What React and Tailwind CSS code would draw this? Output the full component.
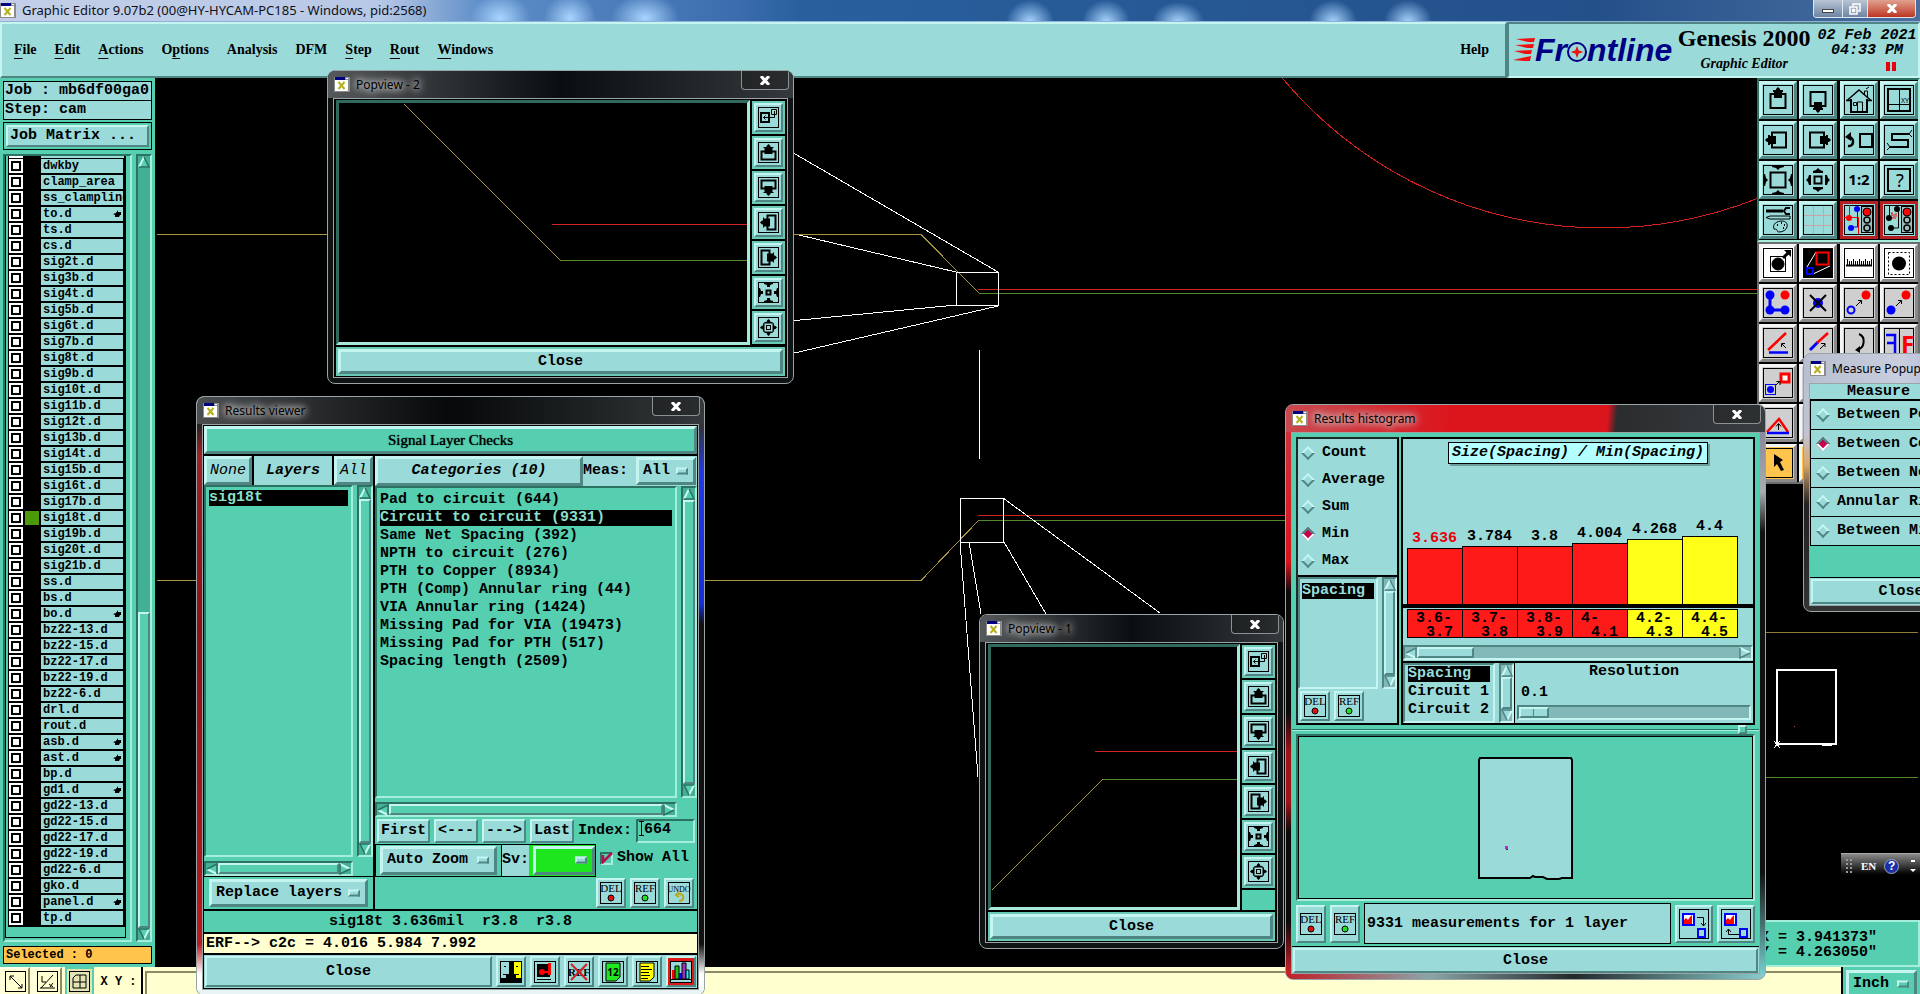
import React from 'react';
import clsx from 'clsx';

const MONO = "font-['Liberation_Mono',monospace] text-[15px] leading-[18px] font-bold";
const SERIF = "font-['Liberation_Serif',serif]";
const SANS = "font-['Noto_Sans',sans-serif]";

const RAISED = 'border-2 border-t-[#c4f5f1] border-l-[#c4f5f1] border-r-[#4f8583] border-b-[#4f8583]';
const SUNKEN = 'border-2 border-t-[#4f8583] border-l-[#4f8583] border-r-[#c4f5f1] border-b-[#c4f5f1]';
const TEAL_SUNKEN = 'border-2 border-t-[#2b7262] border-l-[#2b7262] border-r-[#a5eedb] border-b-[#a5eedb]';
const GRAY_RAISED = 'border-[3px] border-t-[#f4f4f4] border-l-[#f4f4f4] border-r-[#8a8a8a] border-b-[#8a8a8a]';

const layers = [
  'dwkby', 'clamp_area', 'ss_clampline', 'to.d', 'ts.d', 'cs.d', 'sig2t.d', 'sig3b.d', 'sig4t.d', 'sig5b.d',
  'sig6t.d', 'sig7b.d', 'sig8t.d', 'sig9b.d', 'sig10t.d', 'sig11b.d', 'sig12t.d', 'sig13b.d', 'sig14t.d',
  'sig15b.d', 'sig16t.d', 'sig17b.d', 'sig18t.d', 'sig19b.d', 'sig20t.d', 'sig21b.d', 'ss.d', 'bs.d', 'bo.d',
  'bz22-13.d', 'bz22-15.d', 'bz22-17.d', 'bz22-19.d', 'bz22-6.d', 'drl.d', 'rout.d', 'asb.d', 'ast.d', 'bp.d',
  'gd1.d', 'gd22-13.d', 'gd22-15.d', 'gd22-17.d', 'gd22-19.d', 'gd22-6.d', 'gko.d', 'panel.d', 'tp.d',
];
const handLayers = ['to.d', 'bo.d', 'asb.d', 'ast.d', 'gd1.d', 'panel.d'];

const categories = [
  'Pad to circuit (644)', 'Circuit to circuit (9331)', 'Same Net Spacing (392)', 'NPTH to circuit (276)',
  'PTH to Copper (8934)', 'PTH (Comp) Annular ring (44)', 'VIA Annular ring (1424)',
  'Missing Pad for VIA (19473)', 'Missing Pad for PTH (517)', 'Spacing length (2509)',
];

const bars = [
  { value: '3.636', from: '3.6-', to: '3.7', height: 56, low: true, first: true },
  { value: '3.784', from: '3.7-', to: '3.8', height: 58, low: true },
  { value: '3.8', from: '3.8-', to: '3.9', height: 58, low: true },
  { value: '4.004', from: '4-', to: '4.1', height: 61, low: true },
  { value: '4.268', from: '4.2-', to: '4.3', height: 65 },
  { value: '4.4', from: '4.4-', to: '4.5', height: 68 },
];

const menus = [
  ['', 'F', 'ile'], ['', 'E', 'dit'], ['', 'A', 'ctions'], ['O', 'p', 'tions'], ['Analysis', '', ''],
  ['DFM', '', ''], ['', 'S', 'tep'], ['', 'R', 'out'], ['', 'W', 'indows'],
];

/* ---------- icons ---------- */

const Icon = ({ size = 30, children, className }) => (
  <svg width={size} height={size} viewBox={`0 0 ${size} ${size}`} fill="none" stroke="black" className={className} aria-hidden="true">
    {children}
  </svg>
);

const XIcon = () => (
  <svg width="16" height="15" viewBox="0 0 16 15" className="shrink-0" aria-hidden="true">
    <rect x="0" y="0" width="16" height="15" fill="#8b8b8b" />
    <rect x="1" y="3" width="13" height="11" fill="#fff" />
    <rect x="1" y="0" width="10" height="3" fill="#000080" />
    <rect x="12" y="1" width="2" height="1" fill="#fff" />
    <path d="M4.5 5l6 7M10.5 5l-6 7" stroke="#b5b01e" strokeWidth="2" />
  </svg>
);

const PanIcon = ({ turn }) => (
  <Icon>
    <g transform={`rotate(${turn} 15 15)`}>
      <rect x="7.5" y="9" width="15" height="14" strokeWidth="2" />
      <path d="M15 2l2 2v1h3v2h-1v6h-8v-6h-1v-2h3v-1z" fill="black" stroke="none" />
    </g>
  </Icon>
);

const SmallPanIcon = ({ turn }) => (
  <Icon size={21}>
    <rect x=".5" y=".5" width="20" height="20" />
    <g transform={`rotate(${turn} 10.5 10.5)`}>
      <path d="M7 9.5H3.5v8h14v-8H14" strokeWidth="2" />
      <path d="M10.5 2l2 2v1h3v1h-1v6h-8v-6h-1v-1h3v-1z" fill="black" stroke="none" />
    </g>
  </Icon>
);

const fourWay = [0, 90, 180, 270];

const SmallZoomIcon = ({ inward }) => (
  <Icon size={21}>
    <rect x=".5" y=".5" width="20" height="20" />
    <rect x="8.5" y="8.5" width="4" height="4" strokeWidth={inward ? 2 : 1} />
    {fourWay.map(t => (
      <path key={t} transform={`rotate(${t} 10.5 10.5)`} d={inward ? 'M6 1h9v1l-3 1v2h-3v-2l-3-1z' : 'M10.5 2l1.500 1.500v1l3 1v1h-9v-1l3-1v-1z'} fill="black" stroke="none" />
    ))}
  </Icon>
);

const PopviewIcon = () => (
  <Icon size={21}>
    <rect x=".5" y=".5" width="20" height="20" />
    <rect x="3" y="6" width="8" height="9" strokeWidth="2" />
    <path d="M13.500 2.500h5v5h-5zM16.500 4v6.500h-11M7.500 8.500l-2 2 2 2" />
  </Icon>
);

const ZoomIcon = ({ inward }) => (
  <Icon>
    <rect x={inward ? 7.5 : 11.5} y={inward ? 7.5 : 11.5} width={inward ? 15 : 7} height={inward ? 15 : 7} strokeWidth="2" />
    {fourWay.map(t => (
      <path key={t} transform={`rotate(${t} 15 15)`} d={inward ? 'M9 1h12v1l-4 1-2 2-2-2-4-1z' : 'M15 3l2 2 3 1v2h-10v-2l3-1z'} fill="black" stroke="none" />
    ))}
  </Icon>
);

const TrafficIcon = ({ net }) => (
  <Icon>
    {net === 'blue' ? (
      <>
        <path d="M5.500 0v13M0 12.500h14.500V29" stroke="red" />
        <circle cx="5" cy="13" r="3" fill="red" stroke="none" />
        <path d="M13.500 4v18h-6" stroke="blue" />
        <circle cx="13" cy="4" r="3" fill="blue" stroke="none" />
        <circle cx="7" cy="23" r="3" fill="blue" stroke="none" />
      </>
    ) : (
      <>
        <path d="M5.500 0v13M14.500 4v19h-7" />
        <path d="M7 13h5M8 11v-3M10 12V9M12 12V8M7 8h2" stroke="red" />
        <circle cx="5" cy="13" r="3" fill="black" stroke="none" />
        <circle cx="13" cy="4" r="3" fill="black" stroke="none" />
        <circle cx="7" cy="23" r="3" fill="black" stroke="none" />
      </>
    )}
    <rect x="17.500" y="1.500" width="11" height="26" fill="#9cbcbb" />
    <circle cx="23" cy="7" r="4" fill="red" />
    <circle cx="23" cy="15" r="3" strokeWidth="1.500" />
    <circle cx="23" cy="23" r="3" strokeWidth="1.500" />
  </Icon>
);

const viewTools = [
  { name: 'Pan up', icon: <PanIcon turn={0} /> },
  { name: 'Pan down', icon: <PanIcon turn={180} /> },
  { name: 'Home', icon: (
    <Icon>
      <path d="M3 15.500L15 5l12 10.500M2 15.500h4M24 15.500h4" strokeWidth="1.500" />
      <path d="M13.500 26v-9h5v9M9.500 17.500h3v3h-3zM20.500 10V6h3v6M22 4l3-2" />
      <path d="M7 14v13h16V14" strokeWidth="2" />
    </Icon>
  ) },
  { name: 'XY view', icon: (
    <Icon>
      <rect x="4" y="4" width="22" height="22" strokeWidth="2" />
      <path d="M15.500 4v22M4 19.500h22" />
      <text x="17" y="18" fontSize="7" stroke="none" fill="black" className={SANS}>XY</text>
    </Icon>
  ) },
  { name: 'Pan left', icon: <PanIcon turn={270} /> },
  { name: 'Pan right', icon: <PanIcon turn={90} /> },
  { name: 'Previous view', icon: (
    <Icon>
      <rect x="16" y="9" width="12" height="13" strokeWidth="2" />
      <path d="M4 21c6 1 7-8 1-9" strokeWidth="2.500" />
      <path d="M1 12l6-5v9z" fill="black" stroke="none" />
    </Icon>
  ) },
  { name: 'Snake', icon: (
    <Icon>
      <path d="M25 9H8v6h16v7H6" strokeWidth="2" />
      <path d="M25 9l3-4M25 9l3 3M6 22l-3-4M6 22l-3 3" />
    </Icon>
  ) },
  { name: 'Zoom out', icon: <ZoomIcon inward /> },
  { name: 'Zoom in', icon: <ZoomIcon /> },
  { name: 'Zoom 1:2', icon: (
    <Icon><text x="15" y="20" textAnchor="middle" fontSize="15" fontWeight="bold" stroke="none" fill="black" className={SANS}>1:2</text></Icon>
  ) },
  { name: 'Query', icon: (
    <Icon>
      <rect x="4" y="4" width="22" height="22" strokeWidth="2" />
      <text x="16" y="22" textAnchor="middle" fontSize="18" stroke="none" fill="black" className={SANS}>?</text>
    </Icon>
  ) },
  { name: 'Settings', icon: (
    <Icon>
      <path d="M3 6h17" strokeWidth="3" />
      <path d="M27 3h-4l-2 3 2 3h4" strokeWidth="2" />
      <path d="M3 12.500l4-1.500h20v3H7z" />
      <path d="M11 24c-2-5 3-8 8-8 4 0 6 3 5 6-1 3-4 5-8 5-3 0 0-3-5-3z" />
      <path d="M14 20h1M18 18h1M21 20h1M20 23h1" strokeWidth="2" />
    </Icon>
  ) },
  { name: 'Grid', icon: (
    <Icon><path d="M10.500 1v28M20.500 1v28M1 10.500h28M1 20.500h28" stroke="#c9a5a8" /></Icon>
  ) },
  { name: 'Net filter', alert: true, icon: <TrafficIcon net="blue" /> },
  { name: 'Resistor filter', alert: true, icon: <TrafficIcon net="black" /> },
];

const editTools = [
  { name: 'Select feature', tone: 'white', icon: (
    <Icon>
      <rect x="7.500" y="8.500" width="15" height="15" />
      <circle cx="15" cy="16" r="6" fill="black" />
      <path d="M20 10l7-7" strokeWidth="3" />
      <path d="M21 2h7v7z" fill="black" stroke="none" />
    </Icon>
  ) },
  { name: 'Select area', tone: 'white', icon: (
    <Icon>
      <rect x="1" y="1" width="28" height="28" fill="black" />
      <path d="M4 19L13 4M10 26l17-8" stroke="white" />
      <rect x="13.500" y="4.500" width="12" height="12" stroke="red" strokeWidth="2" />
      <rect x="4" y="20" width="6" height="6" stroke="blue" strokeWidth="2" />
    </Icon>
  ) },
  { name: 'Ruler', tone: 'white', icon: (
    <Icon>
      <path d="M2 17.500h26" strokeWidth="2" />
      <path d="M3.500 11v6M5.500 13v4M7.500 13v4M9.500 11v6M11.500 13v4M13.500 13v4M15.500 11v6M17.500 13v4M19.500 13v4M21.500 11v6M23.500 13v4M25.500 13v4M27.500 11v6" />
    </Icon>
  ) },
  { name: 'Highlight', tone: 'white', icon: (
    <Icon>
      <rect x="4.500" y="4.500" width="21" height="22" strokeDasharray="2 2" />
      <circle cx="15" cy="15.500" r="7" fill="black" stroke="none" />
    </Icon>
  ) },
  { name: 'Copy chain', icon: (
    <Icon>
      <path d="M7 7v15h15" stroke="blue" strokeWidth="3" />
      <circle cx="7" cy="7" r="4.500" fill="blue" stroke="none" />
      <circle cx="7" cy="22" r="4.500" fill="blue" stroke="none" />
      <circle cx="22" cy="22" r="4.500" fill="blue" stroke="none" />
      <circle cx="22" cy="7" r="4.500" fill="red" stroke="none" />
    </Icon>
  ) },
  { name: 'Delete', icon: (
    <Icon>
      <circle cx="15" cy="15" r="5" fill="blue" stroke="none" />
      <path d="M7 7l16 16M23 7L7 23" strokeWidth="2" />
    </Icon>
  ) },
  { name: 'Move', icon: (
    <Icon>
      <circle cx="7" cy="22" r="3.500" stroke="blue" strokeWidth="2" />
      <circle cx="22" cy="7" r="4.500" fill="red" stroke="none" />
      <path d="M12 18l5-5M14 12.500h3.500V16" />
    </Icon>
  ) },
  { name: 'Copy', icon: (
    <Icon>
      <circle cx="7" cy="22" r="4.500" fill="blue" stroke="none" />
      <circle cx="22" cy="7" r="4.500" fill="red" stroke="none" />
      <path d="M12 18l5-5M14 12.500h3.500V16" />
    </Icon>
  ) },
  { name: 'Angle', icon: (
    <Icon>
      <path d="M5 22L23 5" stroke="red" strokeWidth="2.500" />
      <path d="M6 24.500h19" stroke="blue" strokeWidth="2.500" />
      <path d="M23 20l-4-4M18.500 19v-3.500h3.500" />
    </Icon>
  ) },
  { name: 'Stretch line', icon: (
    <Icon>
      <path d="M7 22l8-8" stroke="blue" strokeWidth="3" />
      <path d="M14 15L25 5" stroke="red" strokeWidth="2.500" />
      <path d="M17 21l5-5M18 15.500h4V19" />
    </Icon>
  ) },
  { name: 'Rotate', icon: (
    <Icon>
      <path d="M15 6c7 3 6 14-2 16" strokeWidth="2" />
      <path d="M11 22l5-4v7z" fill="black" stroke="none" />
    </Icon>
  ) },
  { name: 'Mirror', icon: (
    <Icon>
      <path d="M2 7h9v19M3 15h8" stroke="blue" strokeWidth="2.500" />
      <path d="M15.500 1v28" />
      <text x="17" y="25" fontSize="24" fontWeight="bold" stroke="none" fill="red" className={SANS}>F</text>
    </Icon>
  ) },
  { name: 'Substitute', icon: (
    <Icon>
      <rect x="18" y="6" width="8" height="8" stroke="red" strokeWidth="3" fill="white" />
      <rect x="2.500" y="16.500" width="10" height="10" stroke="blue" />
      <circle cx="7.500" cy="21.500" r="3.500" fill="blue" stroke="none" />
      <path d="M13 17l3-3M13.500 13.500H17V17" />
    </Icon>
  ) },
  { name: 'Resize' }, { name: 'Polarity' }, { name: 'Attributes' },
  { name: 'Snap angle', icon: (
    <Icon>
      <path d="M4 24L16 11l9 13" stroke="red" strokeWidth="2.500" />
      <path d="M4 25h22" stroke="blue" strokeWidth="2.500" />
      <path d="M15.500 22v-6M13 18.500l2.500-3 2.500 3" />
    </Icon>
  ) },
  { name: 'Snap edge' }, { name: 'Snap center' }, { name: 'Snap grid' },
  { name: 'Pointer', tone: 'orange', icon: (
    <Icon><path d="M11 6l9 6-3 2 4 8-3 1-4-7-3 3z" fill="black" stroke="none" /></Icon>
  ) },
  { name: 'Frame select', tone: 'orange' }, { name: 'Polygon select', tone: 'orange' }, { name: 'Net select', tone: 'orange' },
];

/* ---------- motif widgets ---------- */

const Select = ({ label, options, className, boxClass = 'bg-[#9adbda]', markClass = 'bg-[#9adbda]' }) => (
  <span className={clsx('relative flex', className)}>
    <select aria-label={label} className={clsx(RAISED, boxClass, 'w-full appearance-none border-[3px] px-1')}>
      {options.map(o => <option key={o}>{o}</option>)}
    </select>
    <span className={clsx(RAISED, markClass, 'pointer-events-none absolute right-2 top-1/2 h-[7px] w-3 -translate-y-1/2')} />
  </span>
);

const Arrow = ({ turn, teal }) => (
  <svg width="12" height="12" viewBox="0 0 12 12" className="shrink-0" aria-hidden="true">
    <g transform={`rotate(${turn} 6 6)`}>
      <path d="M6 1L11 11H1z" fill={teal ? '#55cfb0' : '#9adbda'} />
      <path d="M1 11L6 1" stroke="#c9fbf2" strokeWidth="2" />
      <path d="M6 1l5 10H1" stroke={teal ? '#2b7262' : '#4f8583'} strokeWidth="1.500" fill="none" />
    </g>
  </svg>
);

const ScrollBar = ({ horizontal, teal, thumb = 'flex-1', className }) => (
  <div className={clsx(
    'flex shrink-0',
    teal ? [TEAL_SUNKEN, 'bg-[#43b095]'] : [SUNKEN, 'bg-[#83b8b8]'],
    horizontal ? 'h-[15px]' : 'w-4 flex-col',
    className,
  )}>
    <Arrow turn={horizontal ? 270 : 0} teal={teal} />
    <div className={clsx('flex flex-1', !horizontal && 'flex-col')}>
      <div className={clsx(RAISED, teal ? 'bg-[#55cfb0]' : 'bg-[#9adbda]', thumb)} />
    </div>
    <Arrow turn={horizontal ? 90 : 180} teal={teal} />
  </div>
);

const Radio = ({ name, label, checked }) => (
  <label className="flex items-center gap-[7px] whitespace-nowrap">
    <input
      type="radio"
      name={name}
      defaultChecked={checked}
      className="m-0.5 size-[10px] shrink-0 rotate-45 appearance-none border-2 border-t-[#c4f5f1] border-l-[#c4f5f1] border-r-[#4f8583] border-b-[#4f8583] checked:border-t-[#4f8583] checked:border-l-[#4f8583] checked:border-r-white checked:border-b-white checked:bg-[#c8004b]"
    />
    {label}
  </label>
);

const MarkButton = ({ text, dot, tall }) => (
  <button aria-label={text} className={clsx(RAISED, 'flex w-[30px] items-center justify-center bg-[#9adbda] font-normal', tall ? 'h-[38px]' : 'h-[30px]')}>
    <svg width="24" height="24" viewBox="0 0 24 24" className="shrink-0" aria-hidden="true">
      <rect x="1.500" y="1.500" width="21" height="21" fill="none" stroke="black" />
      <text x="12" y="11" textAnchor="middle" fontSize={text === 'UNDO' ? 8 : 11} className={SERIF}>{text}</text>
      {dot
        ? <circle cx="12" cy="17" r="3" fill={dot} stroke="black" />
        : <path d="M10 13h3c5 1 4 7-1 7M12 11l-3 3 3 2" fill="none" stroke="#b9a91c" strokeWidth="2" />}
    </svg>
  </button>
);

const CloseButton = ({ className }) => (
  <button className={clsx(RAISED, 'h-[25px] w-full bg-[#9adbda]', className)}>Close</button>
);

const Window = ({ title, className, titleClass, edge = 'bg-[#101314]', leftEdge, rightEdge, light, children }) => (
  <section className={clsx('absolute flex flex-col overflow-hidden rounded-lg border border-[#9aa3a6]', edge, className)}>
    <header className={clsx('flex shrink-0 items-center gap-1.5 pl-1.5', light ? 'h-[29px]' : 'h-[27px]', titleClass)}>
      <XIcon />
      <h2 className={clsx(SANS, 'flex-1 text-[12px] text-black', !light && '[text-shadow:0_0_6px_#ddd,0_0_8px_#ccc,0_0_12px_#bbb]')}>{title}</h2>
      {!light && (
        <button aria-label="Close window" className="mr-1 flex h-[19px] w-12 items-center justify-center self-start rounded-b border border-t-0 border-[#8b9294] bg-black/20">
          <svg width="10" height="9" viewBox="0 0 10 9" aria-hidden="true"><path d="M1 0l8 9M9 0L1 9" stroke="white" strokeWidth="3" /></svg>
        </button>
      )}
    </header>
    <div className="flex min-h-0 flex-1">
      <div className={clsx('w-[5px] shrink-0', leftEdge)} />
      <div className={clsx(MONO, 'flex min-w-0 flex-1 flex-col border border-[#9aa3a6]')}>{children}</div>
      <div className={clsx('w-[5px] shrink-0', rightEdge)} />
    </div>
    <div className="h-[5px] shrink-0" />
  </section>
);

/* ---------- page parts ---------- */

const TitleBar = () => (
  <header className="relative flex h-[22px] shrink-0 items-center gap-1.5 border-b border-[#8fb0d8] bg-[radial-gradient(ellipse_24px_22px_at_1030px_22px,#a8d4ff,transparent),radial-gradient(ellipse_24px_22px_at_1106px_22px,#a8d4ff,transparent),radial-gradient(ellipse_26px_20px_at_1178px_22px,#a8d4ff,transparent),radial-gradient(ellipse_24px_22px_at_1333px_22px,#a8d4ff,transparent),radial-gradient(ellipse_24px_22px_at_1408px_22px,#a8d4ff,transparent),radial-gradient(ellipse_30px_24px_at_500px_18px,#a8d4ff,transparent),radial-gradient(ellipse_26px_24px_at_570px_18px,#a8d4ff,transparent),radial-gradient(ellipse_34px_24px_at_645px_18px,#a8d4ff,transparent),linear-gradient(90deg,#c3cfe8_0,#b7c8e6_380px,#5f8fc8_480px,#3b6cad_740px,#28609e_800px,#24508a_1600px,#4a6f9f_1920px)]">
    <XIcon />
    <h1 className={clsx(SANS, 'text-[13px] text-[#101018]')}>Graphic Editor 9.07b2 (00@HY-HYCAM-PC185 - Windows, pid:2568)</h1>
    <div className="mr-1 ml-auto flex h-[18px] self-start overflow-hidden rounded-b border border-t-0 border-[#dfe6ee]">
      <button aria-label="Minimize" className="flex w-7 items-end justify-center bg-linear-to-b from-[#b9c5d4] to-[#6e86a4] pb-1"><span className="h-1 w-3 border border-[#444] bg-white" /></button>
      <button aria-label="Restore" className="flex w-[26px] items-center justify-center border-x border-[#dfe6ee] bg-linear-to-b from-[#b9c5d4] to-[#6e86a4]">
        <svg width="12" height="12" viewBox="0 0 12 12" fill="none" stroke="white" strokeWidth="1.500" aria-hidden="true"><path d="M4 3V1h7v7H9" /><rect x="1" y="4" width="7" height="7" /><rect x="3.500" y="6.500" width="2" height="2" /></svg>
      </button>
      <button aria-label="Exit" className="flex w-[47px] items-center justify-center bg-linear-to-b from-[#e0a08f] to-[#bb3220]">
        <svg width="10" height="9" viewBox="0 0 10 9" aria-hidden="true"><path d="M1 0l8 9M9 0L1 9" stroke="white" strokeWidth="3" /></svg>
      </button>
    </div>
  </header>
);

const MenuBar = () => (
  <div className="flex h-14 shrink-0 bg-[#9adbda]">
    <nav className={clsx(SERIF, 'flex flex-1 items-center gap-[18px] border-2 border-t-[#c4f5f1] border-l-[#c4f5f1] border-r-[#4f8583] border-b-[#4f8583] pr-4 pb-0.5 pl-3 text-[14px] font-bold')}>
      {menus.map(([a, u, b]) => (
        <button key={a + u + b}>{a}<span className="underline underline-offset-4">{u}</span>{b}</button>
      ))}
      <button className="ml-auto">Help</button>
    </nav>
    <div className="flex w-[413px] border-2 border-t-[#4f8583] border-l-[#4f8583] border-r-[#c4f5f1] border-b-[#c4f5f1]">
      <div className="mt-3 ml-1 flex h-7 items-center">
        <svg width="22" height="24" viewBox="0 0 22 24" aria-hidden="true">
          <path d="M3 1l19-1-1 4h-6zM2 7l19-1-1 4h-6zM1 13l18-1-1 4h-6zM0 22l18-4-1 5h-6z" fill="#f01010" />
        </svg>
        <span className="flex items-center font-['Liberation_Sans',sans-serif] text-[32px] leading-7 font-bold text-[#000084] italic">
          Fr
          <svg width="20" height="24" viewBox="0 0 20 24" className="mt-1" aria-hidden="true">
            <circle cx="10" cy="12" r="9" fill="none" stroke="#000084" strokeWidth="2" />
            <path d="M10 8l1 3 3 1-3 1-1 3-1-3-3-1 3-1z" fill="#f01010" stroke="#f01010" strokeWidth="1.500" />
          </svg>
          ntline
        </span>
      </div>
      <div className={clsx(SERIF, 'flex flex-1 flex-col items-center font-bold')}>
        <span className="text-[24px] leading-7">Genesis 2000</span>
        <span className="mt-1 text-[14px] leading-4 italic">Graphic Editor</span>
      </div>
      <div className="flex w-[102px] flex-col items-center font-['Liberation_Mono',monospace] text-[15px] leading-[15px] font-bold italic">
        <span className="pt-1">02 Feb 2021</span>
        <span>04:33 PM</span>
        <span className="mt-1 ml-12 flex gap-0.5"><i className="h-[9px] w-1 bg-red-600" /><i className="h-[9px] w-1 bg-red-600" /></span>
      </div>
    </div>
  </div>
);

const LayerPanel = () => (
  <aside className={clsx(MONO, 'flex w-[155px] shrink-0 flex-col gap-1 bg-[#55cfb0] px-[3px] pt-[3px] whitespace-nowrap')}>
    <div>
      <div className="h-5 border border-black bg-[#9adbda] px-px">Job : mb6df00ga0</div>
      <div className="h-[19px] border border-t-0 border-black bg-[#9adbda] px-px">Step: cam</div>
    </div>
    <div className="-mt-0.5 border border-black p-0.5">
      <button className={clsx(RAISED, 'w-full bg-[#9adbda] px-0.5 text-left')}>Job Matrix ...</button>
    </div>
    <div className="flex h-[788px] gap-1">
      <div className={clsx(TEAL_SUNKEN, 'flex-1 overflow-hidden')}>
        <div className="mr-1 h-[782px] border border-t-0 border-black pl-0.5">
          <div className="flex h-[3px] gap-[18px] bg-black px-px"><span className="h-0.5 w-3.5 bg-white" /><span className="h-0.5 flex-1 bg-[#9adbda]" /></div>
          {layers.map(name => (
            <div key={name} className="flex h-4 bg-black px-px pb-0.5 text-[12px] leading-[14px]">
              <span className="flex w-3.5 items-center justify-center bg-white">
                <input id={`layer-${name}`} type="checkbox" className="size-[10px] appearance-none border-2 border-black bg-white" />
              </span>
              <span className={clsx('mr-0.5 ml-0.5 w-3.5', name === 'sig18t.d' && 'bg-[#4a9a0a]')} />
              <label htmlFor={`layer-${name}`} className="flex w-[82px] items-center justify-between overflow-hidden bg-[#9adbda] pr-0.5 pl-0.5">
                <span>{name}</span>
                {handLayers.includes(name) && (
                  <svg width="8" height="8" viewBox="0 0 8 8" className="shrink-0" aria-hidden="true"><path d="M0 4l3-1 2-3v2h3v3h-1l-1 2H2V5z" /></svg>
                )}
              </label>
            </div>
          ))}
        </div>
      </div>
      <ScrollBar teal thumb="mt-[444px] flex-1" />
    </div>
    <div className="h-[18px] border border-black bg-[#ffc44c] px-0.5 text-[12px] leading-4">Selected : 0</div>
  </aside>
);

const Canvas = () => (
  <main className="min-w-0 flex-1">
    <svg width="100%" height="100%" fill="none" shapeRendering="crispEdges" aria-label="Layer drawing" role="img">
      <g transform="translate(-155 -78)">
        <circle cx="1603" cy="-190" r="418" stroke="#d02020" />
        <path d="M157 234.500H921L979 293M157 580.500H921L979 520" stroke="#a89340" />
        <path d="M979 293.500H1760M979 520.500H1290" stroke="#4e8a2c" />
        <path d="M978 289.500H1760M978 515.500H1290" stroke="#d02020" />
        <path d="M956.500 272.500h42v33h-42zM790 151L998 272M799 235l157 37M790 321l166-16M790 354l208-48M979.500 350v109" stroke="white" />
        <path d="M960.500 498.500h43v44h-43zM1003 498l157 115M1004 542l42 72M969 542l12 72M960 542l18 235" stroke="white" />
      </g>
    </svg>
  </main>
);

const ToolButton = ({ tool, className }) => (
  <button aria-label={tool.name} className={clsx('flex size-[38px] items-center justify-center', className)}>
    <span className="size-[30px] border border-black *:-m-px">{tool.icon}</span>
  </button>
);

const toneClass = { white: 'bg-white', orange: 'bg-[#ffc44c]', gray: 'bg-[#cfcfcf]' };

const ToolColumn = () => (
  <aside className="flex w-[163px] shrink-0 flex-col">
    <div className="grid grid-cols-4 gap-0.5 border-2 border-t-[#2b7262] border-l-[#2b7262] border-r-[#a5eedb] border-b-[#a5eedb] bg-black py-px">
      {viewTools.map(t => (
        <ToolButton key={t.name} tool={t} className={clsx('border-[3px] bg-[#9adbda]', t.alert ? 'border-[#b51f24]' : 'border-t-[#c4f5f1] border-l-[#c4f5f1] border-r-[#4f8583] border-b-[#4f8583]')} />
      ))}
    </div>
    <div className="grid grid-cols-4 gap-0.5 border-2 border-[#6a6f6e] bg-black">
      {editTools.map(t => (
        <ToolButton key={t.name} tool={t} className={clsx(GRAY_RAISED, toneClass[t.tone || 'gray'])} />
      ))}
    </div>
    <svg className="min-h-0 flex-1" width="100%" fill="none" shapeRendering="crispEdges" role="img" aria-label="Board overview">
      <g transform="translate(-1757 -484)">
        <path d="M1757 632.500h161" stroke="#8f7d36" />
        <path d="M1757 777.500h161" stroke="#4e8a2c" />
        <rect x="1777" y="670" width="59" height="74" stroke="white" strokeWidth="2" />
        <path d="M1774 741l6 7M1780 741l-6 7M1822 745h10" stroke="white" />
        <rect x="1794" y="726" width="1" height="1" fill="#b05050" />
      </g>
    </svg>
    <div className={clsx(MONO, 'h-[47px] border-2 border-t-[#a5eedb] border-l-[#2b7262] border-r-[#a5eedb] border-b-[#a5eedb] bg-[#55cfb0] px-px pt-2')}>
      <p className="leading-[15px]">X = 3.941373"</p>
      <p className="leading-[15px]">Y = 4.263050"</p>
    </div>
  </aside>
);

const bottomTools = [
  { name: 'Diagonal', d: 'M5 5l12 12M5 9V5h4M17 13v4h-4' },
  { name: 'Angle lock', d: 'M4 17L16 4M3 17h15M5 5v6h4M12 13l4 3M16 12l-3 4' },
  { name: 'Grid lock', d: 'M4 17V7l3-3h10v13zM4 11h13M11 4v13' },
];

const BottomBar = () => (
  <footer className={clsx(MONO, 'flex h-[27px] shrink-0 bg-[#ffffcf]')}>
    {bottomTools.map((t, i) => (
      <button key={t.name} aria-label={t.name} className={clsx('mr-0.5 ml-px w-[29px] border-2 border-b-0 p-0.5', i === 2 ? 'border-[#55cfb0] bg-[#e3e3b4]' : 'border-t-[#fffff0] border-l-[#fffff0] border-r-[#8a8a6a]')}>
        <svg width="21" height="21" viewBox="0 0 21 21" fill="none" stroke="black" aria-hidden="true"><rect x=".5" y=".5" width="20" height="20" /><path d={t.d} /></svg>
      </button>
    ))}
    <label htmlFor="xy" className="w-[47px] border-r-2 border-black pt-1.5 text-center text-[12px]">X Y :</label>
    <input id="xy" type="text" className="mt-1 ml-0.5 min-w-0 flex-1 border-t-2 border-l-2 border-[#8a8a6a] outline-none" />
    <div className="w-[79px] border-l-2 border-black bg-[#55cfb0] px-[3px] pt-[3px]">
      <Select label="Units" options={['Inch']} className="h-7" boxClass="bg-[#55cfb0]" markClass="bg-[#55cfb0]" />
    </div>
  </footer>
);

const Popview = ({ title, className, label, children }) => (
  <Window title={title} className={className} titleClass="bg-linear-to-r from-[#55595b] via-[#0b0e10] to-[#35393b]">
    <div className="flex min-h-0 flex-1 flex-col bg-black px-0.5 pt-px pb-px">
      <div className="flex min-h-0 flex-1 gap-0.5 pb-0.5">
        <div className="min-w-0 flex-1 border-[3px] border-t-[#2f6a5c] border-l-[#2f6a5c] border-r-[#a8e9dc] border-b-[#a8e9dc]">
          <svg width="100%" height="100%" fill="none" shapeRendering="crispEdges" role="img" aria-label={label}>{children}</svg>
        </div>
        <div className="flex w-[33px] flex-col gap-0.5 pt-px">
          {[
            ['Detach', <PopviewIcon />], ['Up', <SmallPanIcon turn={0} />], ['Down', <SmallPanIcon turn={180} />],
            ['Left', <SmallPanIcon turn={270} />], ['Right', <SmallPanIcon turn={90} />],
            ['Shrink', <SmallZoomIcon inward />], ['Grow', <SmallZoomIcon />],
          ].map(([name, icon]) => (
            <div key={name} className="shrink-0 border-2 border-[#68c9b4]">
              <button aria-label={name} className={clsx(RAISED, 'flex size-[29px] items-center justify-center bg-[#9adbda]')}>{icon}</button>
            </div>
          ))}
          <div className="min-h-0 flex-1 bg-[#55cfb0]" />
        </div>
      </div>
      <div className="border-2 border-[#68c9b4]"><CloseButton className="border-[3px]" /></div>
    </div>
  </Window>
);

const viewerTools = [
  { name: 'Snapshot', d: <><rect x="1" y="1" width="12" height="20" fill="#9adbda" /><rect x="13" y="1" width="8" height="20" fill="#ff0" /><path d="M9 1h5v12h2v4h5v4H1v-4h5v-4h3z" fill="#000" /><path d="M4 5.500h2M16 5.500h2M3 13.500h3M16 13.500h3" stroke="#000" /></> },
  { name: 'Layer display', d: <><rect x="3" y="3" width="13" height="13" fill="#000" /><circle cx="8" cy="11" r="3" fill="red" /><path d="M14 2h3v12h-3zM9 10h6v2h-6z" fill="red" /><path d="M3 18.500h14" stroke="#000" /></> },
  { name: 'No reference', d: <><text x="11" y="15" textAnchor="middle" fontSize="11" className={SERIF}>REF</text><path d="M3 3l16 16M19 3L3 19" stroke="#d02020" strokeWidth="2" /></> },
  { name: 'Numbering', d: <><path d="M4 2h14v14l-4 4H4z" fill="#20e820" stroke="#000" /><text x="11" y="15" textAnchor="middle" fontSize="10" fontWeight="bold" className={SANS}>12</text></> },
  { name: 'Report', d: <><path d="M4 2h14v14l-4 4H4z" fill="#ff0" stroke="#000" /><path d="M5 5.500h8M5 8.500h11M5 11.500h8M5 14.500h9M5 17.500h7" stroke="#000" /></> },
  { name: 'Histogram', on: true, d: <><path d="M2 18V9h3v9z" fill="red" /><path d="M5 18V5h4v13z" fill="#20c020" stroke="#000" /><path d="M9 18v-6h3v6z" fill="#00f" /><path d="M12 18V2h4v16z" fill="#a030c0" stroke="#000" /><path d="M16 18V9h3v9z" fill="#0ff" stroke="#000" /><path d="M1 18.500h20" stroke="#000" /></> },
];

const ResultsViewer = () => (
  <Window
    title="Results viewer"
    className="top-[396px] left-[196px] h-[600px] w-[509px]"
    titleClass="bg-linear-to-r from-[#4b4e50] via-[#07090a] to-[#35393b]"
    edge="bg-[#e8f4f4]"
    leftEdge="bg-[linear-gradient(#222_0,#a02024_30px,#8c1216_200px,#b81a20_520px,#fff_550px)]"
    rightEdge="bg-[linear-gradient(#333_0,#2238e8_50px,#1630d8_180px,#111_200px,#111_520px,#fff_550px)]"
  >
    <div className="flex min-h-0 flex-1 flex-col gap-0.5 bg-black p-px">
      <h3 className={clsx(RAISED, SERIF, 'flex h-7 shrink-0 items-center justify-center border-[3px] bg-[#55cfb0] text-[15px] font-normal [text-shadow:0_0_1px_#000]')}>Signal Layer Checks</h3>
      <div className="flex min-h-0 flex-1 gap-0.5">
        <div className="flex w-[169px] flex-col">
          <div className="flex h-[29px] gap-0.5 italic">
            <button className={clsx(RAISED, 'w-12 border-[3px] bg-[#9adbda] font-normal')}>None</button>
            <div className="flex flex-1 items-center justify-center bg-[#9adbda]">Layers</div>
            <button className={clsx(RAISED, 'w-[39px] border-[3px] bg-[#9adbda] font-normal')}>All</button>
          </div>
          <div className="flex min-h-0 flex-1 gap-1 bg-[#55cfb0]">
            <div className="flex flex-1 flex-col gap-1">
              <ul className={clsx(TEAL_SUNKEN, 'flex-1 px-[3px] pt-[3px]')}>
                <li className="h-4 bg-black leading-4 text-[#8adfc9]">sig18t</li>
              </ul>
              <ScrollBar horizontal teal />
            </div>
            <ScrollBar teal className="mb-[19px]" />
          </div>
          <div className="border-t border-black bg-[#55cfb0] px-[5px] py-0.5">
            <Select label="Replace mode" options={['Replace layers']} className="h-7" />
          </div>
        </div>
        <div className="flex min-w-0 flex-1 flex-col bg-[#55cfb0]">
          <div className="flex h-[30px] shrink-0 bg-[#9adbda]">
            <button className={clsx(RAISED, 'w-[208px] border-[3px] italic')}>Categories (10)</button>
            <span className="flex flex-1 items-center">Meas:</span>
            <Select label="Meas" options={['All']} className="m-px w-[60px]" />
          </div>
          <div className="flex min-h-0 flex-1 gap-1">
            <ul className={clsx(TEAL_SUNKEN, 'flex-1 px-[3px] pt-1')}>
              {categories.map((c, i) => (
                <li key={c} className="pb-0.5">
                  <span className={clsx('block h-4 leading-4', i === 1 && 'bg-black text-[#8adfc9]')}>{c}</span>
                </li>
              ))}
            </ul>
            <ScrollBar teal />
          </div>
          <ScrollBar horizontal teal className="mt-1 mr-5" />
          <div className="mt-0.5 flex h-6 shrink-0 items-center gap-1 px-0.5">
            <button className={clsx(RAISED, 'h-6 w-[53px] bg-[#9adbda]')}>First</button>
            <button className={clsx(RAISED, 'h-6 w-11 bg-[#9adbda]')}>&lt;---</button>
            <button className={clsx(RAISED, 'h-6 w-11 bg-[#9adbda]')}>---&gt;</button>
            <button className={clsx(RAISED, 'h-6 w-11 bg-[#9adbda]')}>Last</button>
            <label htmlFor="index" className="w-[54px]">Index:</label>
            <span className="relative flex min-w-0 flex-1">
              <input id="index" type="text" defaultValue="664" className={clsx(TEAL_SUNKEN, 'h-6 w-full pb-1 pl-1.5 outline-none')} />
              <svg width="5" height="15" viewBox="0 0 5 15" fill="none" stroke="black" className="pointer-events-none absolute top-0.5 left-[3px]" aria-hidden="true"><path d="M0 .5h5M2.500 0v15M0 14.500h5" /></svg>
            </span>
          </div>
          <div className="flex h-[34px] shrink-0 items-center">
            <div className="flex h-[33px] border border-black">
              <Select label="Zoom mode" options={['Auto Zoom']} className="mx-1 my-px w-[117px]" />
              <span className="flex w-7 items-center border-l border-black bg-[#9adbda]">Sv:</span>
              <Select label="Severity" options={[' ']} className="w-[66px] bg-[#1ee61e] py-px pl-1" boxClass="bg-[#1ee61e]" />
            </div>
            <label className="ml-1 flex items-center gap-1 pb-1 whitespace-nowrap">
              <span className={clsx(TEAL_SUNKEN, 'relative flex size-[13px]')}>
                <input type="checkbox" defaultChecked className="size-full appearance-none" />
                <svg width="12" height="12" viewBox="0 0 12 12" className="pointer-events-none absolute -top-0.5 left-0" aria-hidden="true"><path d="M1 3v7l9-9" fill="none" stroke="#b01050" strokeWidth="2.500" /></svg>
              </span>
              Show All
            </label>
          </div>
          <div className="flex h-8 shrink-0 items-center justify-end gap-1 px-[3px]">
            <MarkButton text="DEL" dot="#e01010" />
            <MarkButton text="REF" dot="#20e020" />
            <MarkButton text="UNDO" />
          </div>
        </div>
      </div>
      <div className="flex h-[21px] shrink-0 items-center justify-center bg-[#55cfb0] whitespace-pre">sig18t 3.636mil  r3.8  r3.8</div>
      <div className="flex h-[19px] shrink-0 items-center bg-[#ffffcf] px-0.5">ERF--&gt; c2c = 4.016 5.984 7.992</div>
      <div className="flex h-[33px] shrink-0 gap-1 bg-[#9adbda] p-px">
        <button className={clsx(RAISED, 'flex-1')}>Close</button>
        {viewerTools.map(t => (
          <button key={t.name} aria-label={t.name} className={clsx(RAISED, 'flex w-[30px] items-center justify-center', t.on && 'bg-[#e01818]')}>
            <svg width="22" height="22" viewBox="0 0 22 22" fill="none" className="shrink-0" aria-hidden="true">
              <rect x=".5" y=".5" width="21" height="21" fill="#9adbda" stroke="#000" />
              <g fill="#000">{t.d}</g>
            </svg>
          </button>
        ))}
      </div>
    </div>
  </Window>
);

const SyncIcon = ({ down }) => (
  <Icon className="shrink-0 bg-[#9adbda]">
    <rect x=".5" y=".5" width="29" height="29" />
    <rect x="4" y="5" width="11" height="11" stroke="blue" strokeWidth="2" fill="white" />
    <path d="M5 15v-4l2-2 2 2 2-3 2-2v9z" fill="red" stroke="none" />
    <rect x="19" y="20" width="7" height="8" stroke="blue" strokeWidth="2" />
    {down
      ? <path d="M18 8.500h6.500V17M22 14l2.500 3 2.500-3" />
      : <path d="M18 25.500H7.500V20M5 23l2.500-3 2.500 3" />}
  </Icon>
);

const Histogram = () => (
  <Window
    title="Results histogram"
    className="top-[404px] left-[1285px] h-[576px] w-[481px]"
    titleClass="bg-[linear-gradient(95deg,#c94a50_0,#dc141c_35%,#dc141c_67%,#2a2c2e_69%,#3a3e40)]"
    edge="bg-[linear-gradient(90deg,#c02028,#8aa5a8_30%,#23282a_60%,#8cc)]"
    leftEdge="bg-[linear-gradient(#d03038_0,#d8141c_130px,#0a0a0a_160px,#0a0a0a_280px,#a01418_320px,#a01418_370px,#0a0a0a_400px,#0a0a0a_490px,#d02028)]"
    rightEdge="bg-[linear-gradient(#889_0,#a8adb0_60px,#111_100px,#111_440px,#7cc)]"
  >
    <div className="flex min-h-0 flex-1 flex-col bg-[#55cfb0]">
      <div className="mx-1 mt-1 flex h-[288px] shrink-0 gap-0.5">
        <div className="flex w-[103px] flex-col border-2 border-t-[#1d2a28] border-l-[#1d2a28] border-r-black border-b-black bg-[#9adbda]">
          <div role="radiogroup" aria-label="Metric" className="flex h-[138px] flex-col justify-around border-b-2 border-black pl-[3px]">
            {['Count', 'Average', 'Sum', 'Min', 'Max'].map(m => <Radio key={m} name="metric" label={m} checked={m === 'Min'} />)}
          </div>
          <div className="flex min-h-0 flex-1 gap-1">
            <ul className={clsx(SUNKEN, 'flex-1 px-0.5 pt-1')}><li className="h-4 bg-black leading-4 text-[#9adbda]">Spacing</li></ul>
            <ScrollBar className="w-[15px]" />
          </div>
          <div className="flex gap-1 p-0.5"><MarkButton text="DEL" dot="#e01010" /><MarkButton text="REF" dot="#20e020" /></div>
        </div>
        <div className="flex min-w-0 flex-1 flex-col border-2 border-black bg-[#9adbda]">
          <div className="flex h-[169px] shrink-0 flex-col items-center justify-between pt-[3px]">
            <div className="flex h-[22px] items-center border border-black bg-[#b4ffff] px-[3px] italic shadow-[2px_2px_0_#6f9d9c]">Size(Spacing) / Min(Spacing)</div>
            <div className="flex w-full items-end border-b-4 border-black pl-1">
              {bars.map(b => (
                <div key={b.value} className="w-[55px]">
                  <div className={clsx('text-center', b.first && 'text-red-600')}>{b.value}</div>
                  <div className={clsx('border border-r-0 border-b-0 border-black', b.low ? 'bg-[#ff1a1a]' : 'bg-[#ffff1a]')} style={{ height: b.height }} />
                </div>
              ))}
              <div className="h-[68px] w-px bg-black" />
            </div>
          </div>
          <div className="mt-px flex shrink-0 pl-1">
            {bars.map(b => (
              <div key={b.value} className={clsx('h-[29px] w-[55px] overflow-hidden border border-r-0 border-black pt-0.5 pl-2', b.low ? 'bg-[#ff1a1a]' : 'bg-[#ffff1a]')}>
                <div className="leading-[14px]">{b.from}</div>
                <div className="pl-2.5 leading-[14px]">{b.to}</div>
              </div>
            ))}
            <div className="w-px bg-black" />
          </div>
          <ScrollBar horizontal thumb="w-[57px]" className="mt-[7px]" />
          <div className="mt-px flex min-h-0 flex-1 border-t-2 border-black">
            <ul className={clsx(SUNKEN, 'w-[92px] px-[3px] pt-px')}>
              {['Spacing', 'Circuit 1', 'Circuit 2'].map((s, i) => (
                <li key={s} className="h-[18px]"><span className={clsx('block h-4 leading-4', i === 0 && 'bg-black text-[#9adbda]')}>{s}</span></li>
              ))}
            </ul>
            <ScrollBar className="ml-1 w-[15px]" />
            <div className="flex min-w-0 flex-1 flex-col justify-between border-l border-black px-0.5 pb-[3px]">
              <label htmlFor="resolution" className="text-center">Resolution</label>
              <span className="pl-1">0.1</span>
              <input id="resolution" type="range" min="0" max="100" defaultValue="0" className={clsx(SUNKEN, 'h-[15px] w-full appearance-none bg-[#83b8b8] [&::-webkit-slider-thumb]:h-[11px] [&::-webkit-slider-thumb]:w-[30px] [&::-webkit-slider-thumb]:appearance-none [&::-webkit-slider-thumb]:border-2 [&::-webkit-slider-thumb]:border-t-[#c4f5f1] [&::-webkit-slider-thumb]:border-r-[#4f8583] [&::-webkit-slider-thumb]:border-b-[#4f8583] [&::-webkit-slider-thumb]:border-l-[#c4f5f1] [&::-webkit-slider-thumb]:bg-[linear-gradient(90deg,#9adbda_12px,#4f8583_12px,#4f8583_13px,#9adbda_13px)]')} />
            </div>
          </div>
        </div>
      </div>
      <div className="flex h-[9px] shrink-0 items-center">
        <span className="h-0.5 flex-1 border-t border-[#2b7262] bg-[#a5eedb]" />
        <span className={clsx(RAISED, 'size-[9px] bg-[#55cfb0]')} />
        <span className="h-0.5 w-3 border-t border-[#2b7262] bg-[#a5eedb]" />
      </div>
      <div className={clsx(TEAL_SUNKEN, 'mx-1 flex min-h-0 flex-1')}>
        <div className="flex flex-1 items-center justify-center border border-black">
          <svg width="98" height="124" viewBox="0 0 98 124" aria-hidden="true">
            <path d="M3 2h91l1 2v118h-10l-3 1h-12l-4-2h-8l-2-1-3 2H2V4z" fill="#9adbda" stroke="black" strokeWidth="2" />
            <rect x="28" y="90" width="3" height="3" fill="#d020d0" />
            <rect x="29" y="93" width="2" height="1" fill="#333" />
          </svg>
        </div>
      </div>
      <div className="mx-1 flex h-[45px] shrink-0 items-center gap-1">
        <MarkButton text="DEL" dot="#e01010" tall />
        <MarkButton text="REF" dot="#20e020" tall />
        <div className="flex h-[41px] flex-1 items-center border border-black bg-[#9adbda] px-0.5">9331 measurements for 1 layer</div>
        <button aria-label="Histogram to results" className={clsx(RAISED, 'flex h-[38px] w-[38px] items-center justify-center bg-[#9adbda]')}><SyncIcon down /></button>
        <button aria-label="Results to histogram" className={clsx(RAISED, 'flex h-[38px] w-[38px] items-center justify-center bg-[#9adbda]')}><SyncIcon /></button>
      </div>
      <div className="shrink-0 border-t border-black bg-[#9adbda] px-px pt-px"><CloseButton /></div>
    </div>
  </Window>
);

const MeasurePopup = () => (
  <Window
    title="Measure Popup"
    light
    className="top-[353px] left-[1803px] h-[259px] w-[196px]"
    titleClass="bg-[linear-gradient(90deg,#b8bfd0,#c9cede_50%,#8f98d8)]"
    edge="bg-[linear-gradient(#b8bfd0_0,#c0c4d4_80px,#d8a870_110px,#222_150px,#333_100%)]"
  >
    <div className="flex flex-1 flex-col bg-[#55cfb0]">
      <div className="flex h-4 items-center border-b border-black bg-[#9adbda] pl-[37px]">Measure</div>
      {['Between Po', 'Between Co', 'Between Ne', 'Annular Ri', 'Between Mi'].map(m => (
        <div key={m} className="flex h-[29px] items-center border border-b-0 border-black bg-[#9adbda] pl-[5px]">
          <Radio name="measure" label={m} checked={m === 'Between Co'} />
        </div>
      ))}
      <div className="h-px bg-black" />
      <div className="mt-auto border-t border-black bg-[#9adbda] p-px"><CloseButton /></div>
    </div>
  </Window>
);

const LanguageBar = () => (
  <div className={clsx(MONO, 'absolute top-[853px] right-0 flex h-[25px] w-[79px] items-center border-t border-[#aaa] bg-linear-to-b from-[#8b8b8b] via-[#3a3a3a] to-black pr-1 text-white')}>
    <span className="ml-1 h-4 w-2 bg-[radial-gradient(#999_1px,transparent_1px)] bg-size-[4px_4px]" />
    <button className="ml-2 font-['Liberation_Serif',serif] text-[11px]">EN</button>
    <button aria-label="Help" className="ml-2 flex size-[15px] items-center justify-center rounded-full border border-[#9ab] bg-[#1a2fa8] font-['Liberation_Sans',sans-serif] text-[12px] leading-none">?</button>
    <svg width="6" height="12" viewBox="0 0 6 12" fill="white" className="ml-auto" aria-hidden="true"><path d="M1 0h4v2H1zM0 9h6l-3 3z" /></svg>
  </div>
);

export default function App() {
  return (
    <div className="relative flex h-screen flex-col overflow-hidden bg-black text-black">
      <TitleBar />
      <MenuBar />
      <div className="flex min-h-0 flex-1">
        <LayerPanel />
        <Canvas />
        <ToolColumn />
      </div>
      <BottomBar />

      <Popview title="Popview - 2" label="Popview 2 drawing" className="top-[70px] left-[327px] h-[314px] w-[467px]">
        <path d="M65 1l157 157" stroke="#a89340" />
        <path d="M213 121.500h400" stroke="#d02020" />
        <path d="M222 157.500h400" stroke="#4e8a2c" />
      </Popview>
      <ResultsViewer />
      <Popview title="Popview - 1" label="Popview 1 drawing" className="top-[614px] left-[979px] h-[335px] w-[305px]">
        <path d="M1 243l111-111" stroke="#a89340" />
        <path d="M104 104.500h400" stroke="#d02020" />
        <path d="M112 132.500h400" stroke="#4e8a2c" />
      </Popview>
      <Histogram />
      <MeasurePopup />
      <LanguageBar />
    </div>
  );
}
